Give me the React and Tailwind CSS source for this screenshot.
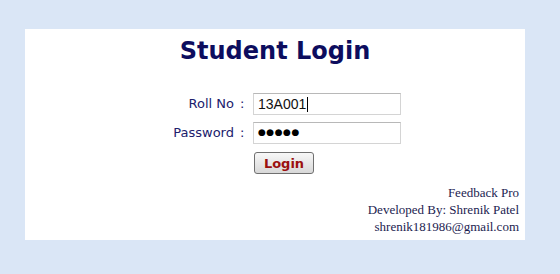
import React from "react";

export default function App() {
  const verdana = { fontFamily: '"DejaVu Sans", Verdana, sans-serif' };
  const field = { fontFamily: '"Liberation Sans", Arial, sans-serif' };

  return (
    <div className="min-h-[274px] w-[560px] bg-[#dae6f6] pt-[29px] pl-[25px]">
      <div className="w-[500px] h-[211px] bg-white flex flex-col">
        {/* title */}
        <h1
          className="mt-[7px] text-center text-[24px] font-bold leading-[30px] text-[#0d0d5e]"
          style={verdana}
        >
          Student Login
        </h1>

        {/* form */}
        <div className="mt-[27px] flex flex-col gap-[7px] text-[13px] text-[#20206c]" style={verdana}>
          <div className="flex items-center h-[22px]">
            <span className="w-[209px] text-right">Roll No</span>
            <span className="w-[19px] pl-[6px]">:</span>
            <div
              className="w-[148px] h-[22px] border border-[#d4d4d4] border-t-[#b8b8b8] flex items-center pl-[4px] text-[14px] text-[#111]"
              style={field}
            >
              13A001<span className="ml-[1px] w-px h-[15px] bg-black" />
            </div>
          </div>
          <div className="flex items-center h-[22px]">
            <span className="w-[209px] text-right">Password</span>
            <span className="w-[19px] pl-[6px]">:</span>
            <div className="w-[148px] h-[22px] border border-[#d4d4d4] border-t-[#b8b8b8] flex items-center pl-[4px] text-[9px] tracking-[0.5px] text-black">
              ●●●●●
            </div>
          </div>
          <div className="flex mt-[1px]">
            <button
              type="button"
              className="ml-[229px] w-[60px] h-[22px] rounded-[3px] border border-[#707070] bg-gradient-to-b from-[#f8f8f8] to-[#d8d8d8] text-[13px] font-bold text-[#9b1010] leading-none"
              style={verdana}
            >
              Login
            </button>
          </div>
        </div>

        {/* footer */}
        <div
          className="mt-auto mb-[5px] pr-[6px] text-right text-[13px] leading-[17px] text-[#1c1c50]"
          style={{ fontFamily: '"Liberation Serif", "Times New Roman", serif' }}
        >
          <p>Feedback Pro</p>
          <p>Developed By: Shrenik Patel</p>
          <p>shrenik181986@gmail.com</p>
        </div>
      </div>
    </div>
  );
}
